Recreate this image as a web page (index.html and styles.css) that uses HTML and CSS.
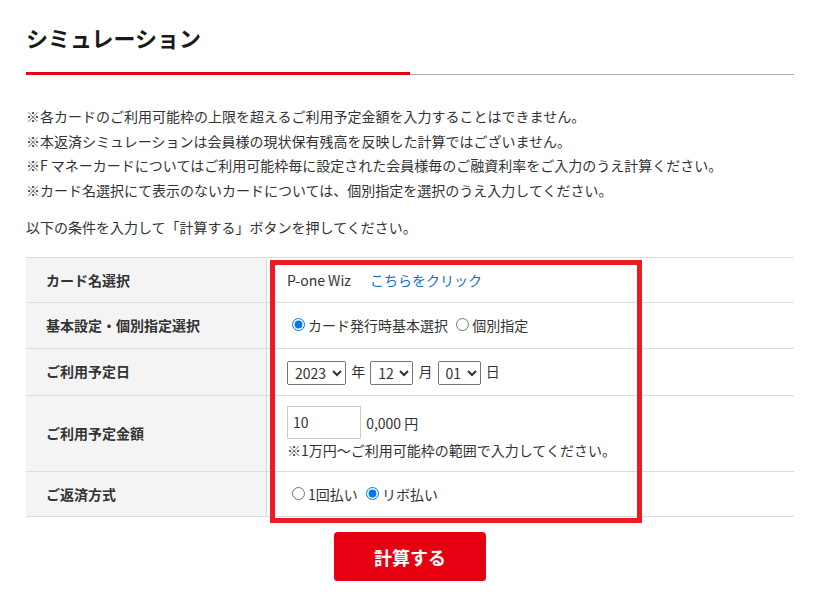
FILE: index.html
```html
<!DOCTYPE html>
<html lang="ja">
<head>
    <meta charset="UTF-8">
    <meta name="viewport" content="width=device-width, initial-scale=1.0">
    <title>シミュレーション</title>
    <link rel="stylesheet" href="styles.css">
</head>
<body>
    <div class="page">
        <h1 class="title">シミュレーション</h1>
        <div class="title-line">
            <span class="line-red"></span>
            <span class="line-gray"></span>
        </div>

        <!-- Notes -->
        <ul class="notes">
            <li>※各カードのご利用可能枠の上限を超えるご利用予定金額を入力することはできません。</li>
            <li>※本返済シミュレーションは会員様の現状保有残高を反映した計算ではございません。</li>
            <li>※F マネーカードについてはご利用可能枠毎に設定された会員様毎のご融資利率をご入力のうえ計算ください。</li>
            <li>※カード名選択にて表示のないカードについては、個別指定を選択のうえ入力してください。</li>
        </ul>
        <p class="lead">以下の条件を入力して「計算する」ボタンを押してください。</p>

        <!-- Form table -->
        <div class="sim-table-wrap">
            <table class="sim-table">
                <tr>
                    <th>カード名選択</th>
                    <td>P-one Wiz <a href="#" class="card-link">こちらをクリック</a></td>
                </tr>
                <tr>
                    <th>基本設定・個別指定選択</th>
                    <td>
                        <label><input type="radio" name="setting" checked>カード発行時基本選択</label>
                        <label><input type="radio" name="setting">個別指定</label>
                    </td>
                </tr>
                <tr>
                    <th>ご利用予定日</th>
                    <td>
                        <select><option>2023</option><option>2024</option></select>
                        <span class="unit">年</span>
                        <select><option>12</option></select>
                        <span class="unit">月</span>
                        <select><option>01</option></select>
                        <span class="unit">日</span>
                    </td>
                </tr>
                <tr>
                    <th>ご利用予定金額</th>
                    <td class="amount-cell">
                        <input type="text" class="amount" value="10"> 0,000 円
                        <div class="amount-note">※1万円～ご利用可能枠の範囲で入力してください。</div>
                    </td>
                </tr>
                <tr>
                    <th>ご返済方式</th>
                    <td>
                        <label><input type="radio" name="pay">1回払い</label>
                        <label><input type="radio" name="pay" checked>リボ払い</label>
                    </td>
                </tr>
            </table>
            <div class="highlight"></div>
        </div>

        <div class="actions">
            <button type="button" class="btn-calc">計算する</button>
        </div>
    </div>
</body>
</html>
```

FILE: styles.css
```css
body {
    margin: 0;
    font-family: "Noto Sans CJK JP", "Noto Sans", sans-serif;
    font-size: 14px;
    color: #333;
    background: #fff;
}

.page {
    width: 768px;
    margin: 0 26px;
    padding-top: 21px;
}

.title {
    margin: 0;
    font-size: 22px;
    line-height: 33px;
    font-weight: bold;
    color: #1a1a1a;
    padding-bottom: 18px;
}

.title-line {
    display: flex;
    align-items: flex-end;
    height: 3px;
}

.line-red {
    flex: 1;
    height: 3px;
    background: #e60012;
}

.line-gray {
    flex: 1;
    height: 1px;
    background: #aaa;
}

.notes {
    list-style: none;
    margin: 29px 0 0;
    padding: 0;
    line-height: 24.5px;
}

.lead {
    margin: 13px 0 17px;
    line-height: 24.5px;
}

.sim-table-wrap {
    position: relative;
}

.sim-table {
    width: 100%;
    border-collapse: collapse;
    border-top: 1px solid #ddd;
}

.sim-table th,
.sim-table td {
    padding: 10px 20px;
    line-height: 24.5px;
    border-bottom: 1px solid #ddd;
    text-align: left;
    vertical-align: middle;
}

.sim-table th {
    width: 200px;
    background: #f4f4f4;
    font-weight: bold;
    border-right: 1px solid #ddd;
}

.card-link {
    color: #1a6fc4;
    text-decoration: none;
    margin-left: 16px;
}

.sim-table select {
    font-family: inherit;
    font-size: 14px;
    height: 24px;
    padding: 0 2px 0 3px;
    color: #333;
    vertical-align: middle;
}

.unit {
    margin: 0 2px;
}

.amount {
    width: 74px;
    height: 33px;
    box-sizing: border-box;
    padding: 0 5px;
    border: 1px solid #ccc;
    font-family: inherit;
    font-size: 14px;
    color: #333;
    margin: 0 2px 0 0;
}

.amount-note {
    line-height: 22px;
}

/* red annotation frame */
.highlight {
    position: absolute;
    left: 244px;
    top: 3px;
    width: 372px;
    height: 263px;
    box-sizing: border-box;
    border: 5px solid #ed1c24;
    pointer-events: none;
}

.actions {
    display: flex;
    justify-content: center;
    margin-top: 15px;
}

.btn-calc {
    width: 152px;
    height: 49px;
    background: #e60012;
    color: #fff;
    border: none;
    border-radius: 4px;
    box-shadow: 0 3px 0 #c8c8c8;
    font-family: inherit;
    font-size: 18px;
    font-weight: bold;
    cursor: pointer;
}
```
